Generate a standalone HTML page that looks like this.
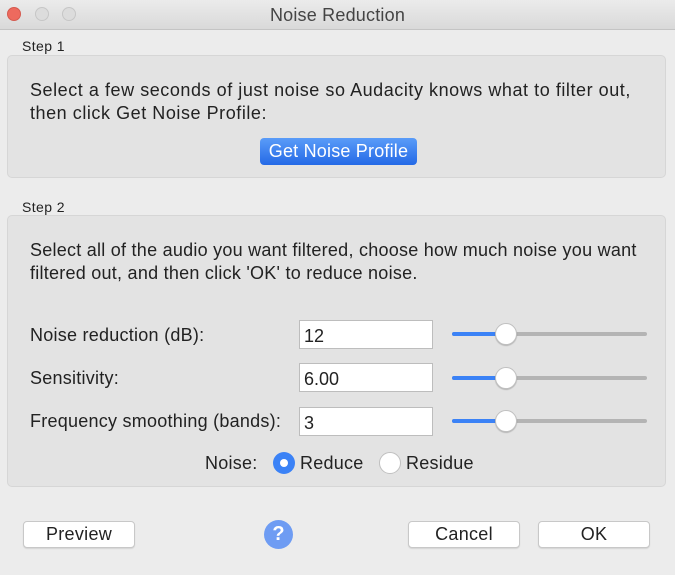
<!DOCTYPE html>
<html><head><style>
*{box-sizing:border-box;margin:0;padding:0}
body{width:675px;height:575px;background:#ececec;font-family:"Liberation Sans",sans-serif;color:#222;position:relative;overflow:hidden}
.a{position:absolute;white-space:nowrap}
.title{left:0;top:0;width:675px;height:30px;background:linear-gradient(#ebebeb,#d9d9d9);border-bottom:1px solid #c4c4c4}
.tl{width:14px;height:14px;border-radius:50%;top:7px}
.box{background:#e3e3e3;border:1px solid #d6d6d6;border-radius:5px}
.t{font-size:18px;letter-spacing:0.25px}
.field{background:#fff;border:1px solid #bdbdbd;width:134px;height:29px;font-size:18px;padding:5px 0 0 4px}
.track{height:4px;border-radius:2px;background:#b4b4b4;width:195px;left:452px}
.fill{height:4px;border-radius:2px;background:#3b82f6;left:452px;width:54px}
.thumb{width:22px;height:22px;border-radius:50%;background:#fff;border:1px solid #c0c0c0;box-shadow:0 1px 1px rgba(0,0,0,.2);left:495px}
.btn{background:#fff;border:1px solid #c8c8c8;border-radius:4px;height:27px;font-size:18px;letter-spacing:0.3px;text-align:center;line-height:25px;box-shadow:0 1px 1px rgba(0,0,0,.1)}
</style></head><body>
<div class="a title"></div>
<div class="a tl" style="left:7px;background:#ed6a5e;border:1px solid #d55a4f"></div>
<div class="a tl" style="left:35px;background:#dcdcdc;border:1px solid #c6c6c6"></div>
<div class="a tl" style="left:62px;background:#dcdcdc;border:1px solid #c6c6c6"></div>
<div class="a" style="left:0;width:675px;top:5px;text-align:center;font-size:18px;letter-spacing:0.2px;color:#444">Noise Reduction</div>

<div class="a" style="left:22px;top:38px;font-size:14px;letter-spacing:0.4px">Step 1</div>
<div class="a box" style="left:7px;top:55px;width:659px;height:123px"></div>
<div class="a t" style="left:30px;top:80px;letter-spacing:0.55px">Select a few seconds of just noise so Audacity knows what to filter out,</div>
<div class="a t" style="left:30px;top:103px;letter-spacing:0.55px">then click Get Noise Profile:</div>
<div class="a" style="left:260px;top:138px;width:157px;height:27px;border-radius:4px;background:linear-gradient(#5a9cf8,#2469e6);color:#fff;font-size:18px;letter-spacing:0.2px;text-align:center;line-height:27px">Get Noise Profile</div>

<div class="a" style="left:22px;top:199px;font-size:14px;letter-spacing:0.4px">Step 2</div>
<div class="a box" style="left:7px;top:215px;width:659px;height:272px"></div>
<div class="a t" style="left:30px;top:240px">Select all of the audio you want filtered, choose how much noise you want</div>
<div class="a t" style="left:30px;top:263px">filtered out, and then click 'OK' to reduce noise.</div>

<div class="a t" style="left:30px;top:325px">Noise reduction (dB):</div>
<div class="a field" style="left:299px;top:320px">12</div>
<div class="a track" style="top:332px"></div><div class="a fill" style="top:332px"></div><div class="a thumb" style="top:323px"></div>

<div class="a t" style="left:30px;top:368px">Sensitivity:</div>
<div class="a field" style="left:299px;top:363px">6.00</div>
<div class="a track" style="top:376px"></div><div class="a fill" style="top:376px"></div><div class="a thumb" style="top:367px"></div>

<div class="a t" style="left:30px;top:411px">Frequency smoothing (bands):</div>
<div class="a field" style="left:299px;top:407px">3</div>
<div class="a track" style="top:419px"></div><div class="a fill" style="top:419px"></div><div class="a thumb" style="top:410px"></div>

<div class="a t" style="left:205px;top:453px">Noise:</div>
<div class="a" style="left:273px;top:452px;width:22px;height:22px;border-radius:50%;background:#3b82f6"></div>
<div class="a" style="left:280px;top:459px;width:8px;height:8px;border-radius:50%;background:#fff"></div>
<div class="a t" style="left:300px;top:453px">Reduce</div>
<div class="a" style="left:379px;top:452px;width:22px;height:22px;border-radius:50%;background:#fff;border:1px solid #c0c0c0"></div>
<div class="a t" style="left:406px;top:453px">Residue</div>

<div class="a btn" style="left:23px;top:521px;width:112px">Preview</div>
<div class="a" style="left:264px;top:520px;width:29px;height:29px;border-radius:50%;background:#6e9cf3;color:#fff;font-size:20px;font-weight:bold;text-align:center;line-height:29px">?</div>
<div class="a btn" style="left:408px;top:521px;width:112px">Cancel</div>
<div class="a btn" style="left:538px;top:521px;width:112px">OK</div>
</body></html>
